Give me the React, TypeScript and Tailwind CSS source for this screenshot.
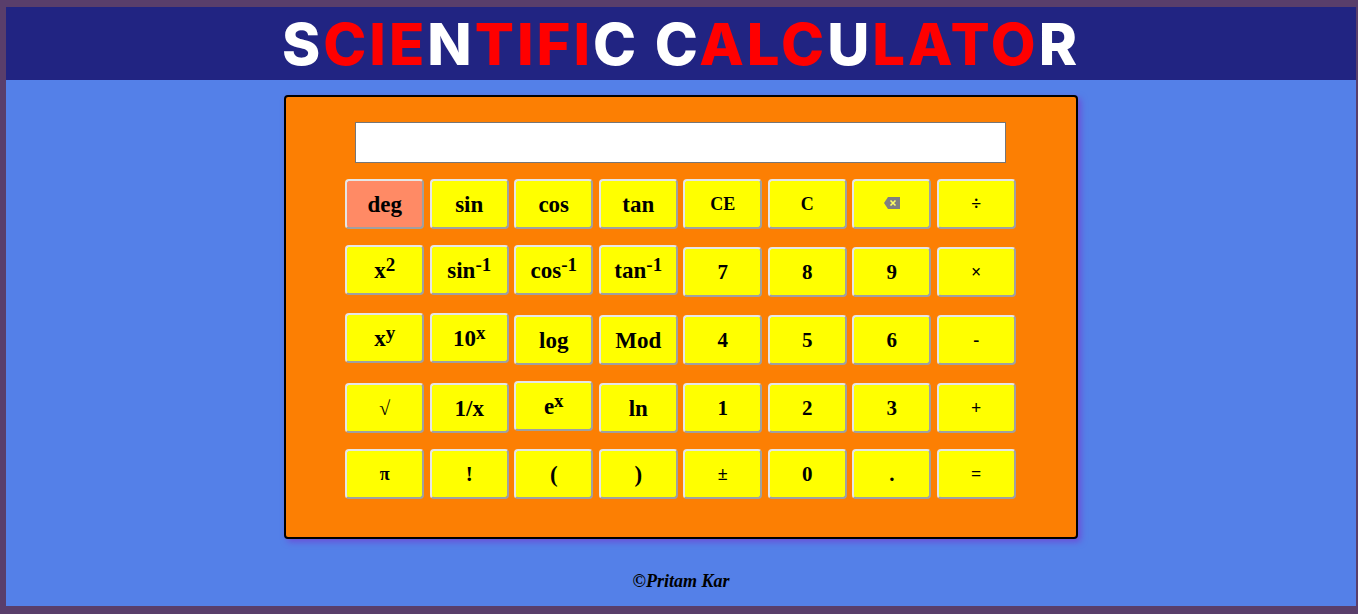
type Cell = { label: React.ReactNode; low?: boolean; size?: string; bg?: string };

const Sup = ({ a, b }: { a: string; b: string }) => (
  <>
    {a}
    <sup className="relative -top-[7px] align-baseline text-[19px] leading-none">{b}</sup>
  </>
);

const Backspace = () => (
  <svg width="16" height="12" viewBox="0 0 16 12" className="mx-auto block -mt-[2px]">
    <path d="M4 0H16V12H4L0 6Z" fill="#808080" />
    <path d="M6.5 3.5L11.5 8.5M11.5 3.5L6.5 8.5" stroke="#ffff66" strokeWidth="1.6" />
  </svg>
);

const digit = "text-[21px]";
const small = "text-[18px]";

const grid: Cell[][] = [
  [
    { label: "deg", bg: "bg-[#ff8a65]" },
    { label: "sin" },
    { label: "cos" },
    { label: "tan" },
    { label: "CE", size: small },
    { label: "C", size: small },
    { label: <Backspace /> },
    { label: "÷", size: small },
  ],
  [
    { label: <Sup a="x" b="2" /> },
    { label: <Sup a="sin" b="-1" /> },
    { label: <Sup a="cos" b="-1" /> },
    { label: <Sup a="tan" b="-1" /> },
    { label: "7", low: true, size: digit },
    { label: "8", low: true, size: digit },
    { label: "9", low: true, size: digit },
    { label: "×", low: true, size: small },
  ],
  [
    { label: <Sup a="x" b="y" /> },
    { label: <Sup a="10" b="x" /> },
    { label: "log", low: true },
    { label: "Mod", low: true },
    { label: "4", low: true, size: digit },
    { label: "5", low: true, size: digit },
    { label: "6", low: true, size: digit },
    { label: "-", low: true, size: small },
  ],
  [
    { label: <span className="font-normal">√</span>, low: true, size: "text-[20px]" },
    { label: "1/x", low: true },
    { label: <Sup a="e" b="x" /> },
    { label: "ln", low: true },
    { label: "1", low: true, size: digit },
    { label: "2", low: true, size: digit },
    { label: "3", low: true, size: digit },
    { label: "+", low: true, size: small },
  ],
  [
    { label: "π", size: small },
    { label: "!", size: digit },
    { label: "(" },
    { label: ")" },
    { label: "±", size: small },
    { label: "0", size: digit },
    { label: ".", size: digit },
    { label: "=", size: small },
  ],
];

const title: [string, boolean][] = [
  ["S", false],
  ["CIE", true],
  ["N", false],
  ["TIFI", true],
  ["C C", false],
  ["ALC", true],
  ["U", false],
  ["LATO", true],
  ["R", false],
];

export default function App() {
  return (
    <div className="h-[614px] w-[1358px] overflow-hidden bg-[#593e6b] pt-[7px] pr-[2px] pb-[8px] pl-[6px]">
      <div className="flex h-full flex-col bg-[#5480e8]">
        <header className="flex h-[73px] items-center justify-center bg-[#212482]">
          <h1 className="font-['Inter',sans-serif] text-[58px] leading-none font-extrabold tracking-[3px] whitespace-pre text-white">
            {title.map(([t, red], i) => (
              <span key={i} className={red ? "text-[#ff0000]" : "text-white"}>
                {t}
              </span>
            ))}
          </h1>
        </header>
        <main className="mt-[15px] ml-[278px] flex h-[444px] w-[794px] flex-col items-center rounded-[4px] border-2 border-black bg-[#fc7f03] pt-[25px] pr-[1px] shadow-[3px_3px_6px_#6a50d8]">
          <div className="h-[41px] w-[651px] border border-[#767676] bg-white" />
          <div className="mt-[16px] flex flex-col gap-4">
            {grid.map((row, r) => (
              <div key={r} className="flex items-start gap-[5.5px]">
                {row.map((b, c) => (
                  <button
                    key={c}
                    className={`h-[50px] w-[79px] rounded-[4px] border-2 border-t-[#e6e6e6] border-r-[#a0a0a0] border-b-[#a0a0a0] border-l-[#e6e6e6] font-['Liberation_Serif',serif] leading-none font-bold text-black ${
                      b.size ?? "text-[23px]"
                    } ${b.bg ?? "bg-[#ffff00]"} ${b.low ? "mt-[2px]" : ""}`}
                  >
                    {b.label}
                  </button>
                ))}
              </div>
            ))}
          </div>
        </main>
        <footer className="mt-[30px] text-center font-['Liberation_Serif',serif] text-[18px] leading-[24px] font-bold text-black italic">
          ©Pritam Kar
        </footer>
      </div>
    </div>
  );
}
